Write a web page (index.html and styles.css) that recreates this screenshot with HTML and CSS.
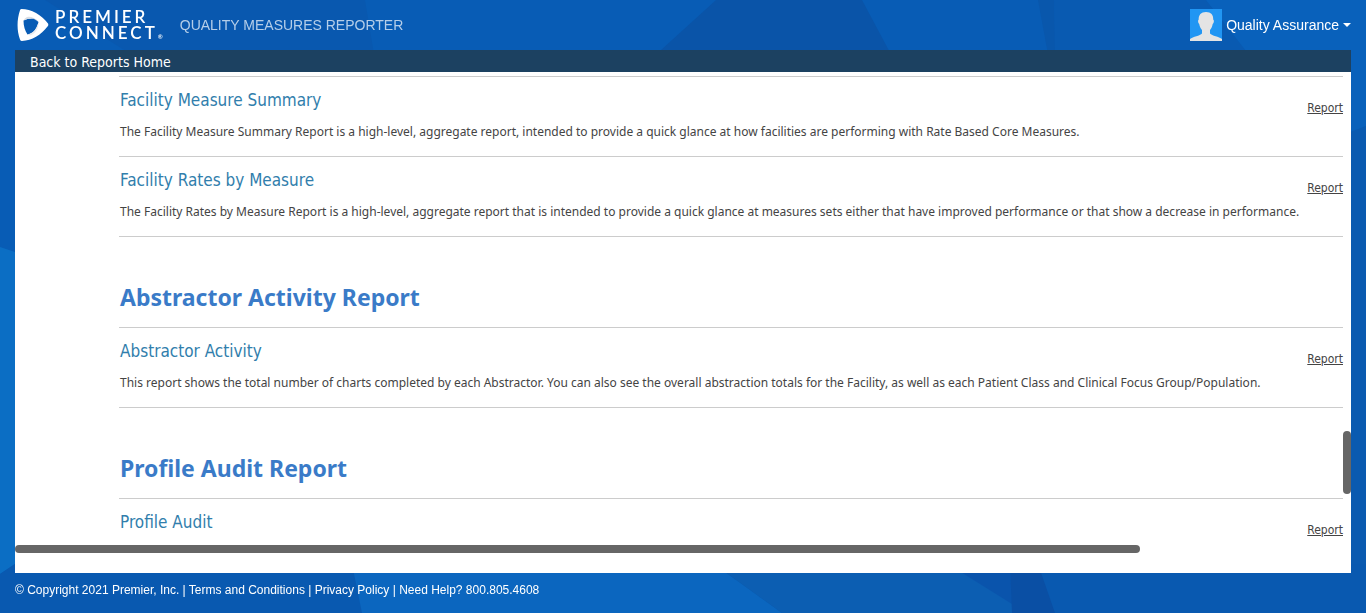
FILE: index.html
```html
<!DOCTYPE html>
<html lang="en">
<head>
<meta charset="utf-8">
<title>Quality Measures Reporter</title>
<link rel="stylesheet" href="styles.css">
</head>
<body>
<svg class="backdrop" viewBox="0 0 1366 613" preserveAspectRatio="none" aria-hidden="true">
  <path fill="#085cb5" d="M0 0h1366v613H0z"/>
  <path fill="#0958af" d="M45 0h320l10 60H140z"/>
  <path fill="#0a54a8" d="M716 0h146l32 60H650z"/>
  <path fill="#0957ac" d="M1038 0h16l2 60h-7z"/>
  <path fill="#095ab1" d="M1054 0h152l48 60h-199z"/>
  <path fill="#0961bb" d="M1206 0h160v126l-20 10-96-80z"/>
  <path fill="#0a5ab0" d="M1340 136l26-10v487h-26z"/>
  <path fill="#0b6ec4" d="M0 247l30 10v297L0 574z"/>
  <path fill="#0959b0" d="M0 574l30-20v10h1336v49H0z"/>
  <path fill="#0b66bf" d="M352 564l10 49h420l-68-49z"/>
  <path fill="#0c5eb2" d="M714 564h240l72 49H782z"/>
  <path fill="#0a54ac" d="M948 564h62l2 40z"/>
  <path fill="#0a4fa4" d="M1010 564h28l17 49h-43z"/>
</svg>
<div class="page">
  <header class="header">
    <a class="brand" href="#" aria-label="Premier Connect">
      <svg class="brand-mark" viewBox="0 0 32 32" aria-hidden="true">
        <path fill="#fff" fill-rule="evenodd" d="M4.500 0 C14 0 25 6 31 14.500 Q31.800 16 30.500 17.500 C24 26 15 31.500 5 32 Q3.500 32 3 30.500 C-.5 21 0 10 3 1.200 Q3.400 0 4.500 0Z M6.500 11.500 C6.500 17 8 22 10.500 25.500 C15.500 24.500 19.500 21 21.500 13 Q20 10.500 16.500 9.500 Q11 9 6.500 11.500Z"/>
        <path fill="#d9dde3" d="M6.500 11.500Q11 9 16.500 9.500L21.500 13Q16 7 10 8 7.500 9 6.500 11.500Z"/>
        <path fill="#e9ebee" d="M21.500 13C19.500 21 15.500 24.500 10.500 25.500L13 26.500C18 25 22 20 21.500 13Z"/>
      </svg>
      <span class="brand-name"><span>PREMIER</span><span>CONNECT<small class="brand-reg">®</small></span></span>
    </a>
    <span class="app-name">QUALITY MEASURES REPORTER</span>
    <button class="user" type="button">
      <svg class="avatar" viewBox="0 0 32 32" aria-hidden="true">
        <path fill="#2196f3" d="M0 0h32v32H0z"/>
        <path fill="#e4e4e4" d="M16 3C11 3 8.500 6 8.700 10.500 7.700 11 7.900 14 9.200 15 9.700 18 11 20 12 21V24.500C10 27 3 27.500 0 30V32H32V30C29 27.500 22 27 20 24.500V21C21 20 22.200 18 22.700 15 24.100 14 24.300 11 23.200 10.500 23.500 6 21 3 16 3Z"/>
      </svg>
      <span>Quality Assurance</span>
      <span class="caret"></span>
    </button>
  </header>
  <div class="panel">
    <nav class="nav"><a href="#">Back to Reports Home</a></nav>
    <main class="reports">
      <section>
        <article class="report">
          <div><h3>Facility Measure Summary</h3>
          <p>The Facility Measure Summary Report is a high-level, aggregate report, intended to provide a quick glance at how facilities are performing with Rate Based Core Measures.</p></div>
          <a class="report-link" href="#">Report</a>
        </article>
        <article class="report">
          <div><h3>Facility Rates by Measure</h3>
          <p>The Facility Rates by Measure Report is a high-level, aggregate report that is intended to provide a quick glance at measures sets either that have improved performance or that show a decrease in performance.</p></div>
          <a class="report-link" href="#">Report</a>
        </article>
      </section>
      <section>
        <h2>Abstractor Activity Report</h2>
        <article class="report">
          <div><h3>Abstractor Activity</h3>
          <p>This report shows the total number of charts completed by each Abstractor. You can also see the overall abstraction totals for the Facility, as well as each Patient Class and Clinical Focus Group/Population.</p></div>
          <a class="report-link" href="#">Report</a>
        </article>
      </section>
      <section>
        <h2>Profile Audit Report</h2>
        <article class="report report-last">
          <div><h3>Profile Audit</h3></div>
          <a class="report-link" href="#">Report</a>
        </article>
      </section>
    </main>
    <span class="thumb thumb-y"></span>
    <span class="thumb thumb-x"></span>
  </div>
  <footer class="footer">© Copyright 2021 Premier, Inc. | <a href="#">Terms and Conditions</a> | <a href="#">Privacy Policy</a> | Need Help? 800.805.4608</footer>
</div>
</body>
</html>
```
FILE: styles.css
```css
* { box-sizing: border-box; }
body {
  margin: 0;
  font-family: "Liberation Sans", Arial, sans-serif;
  color: #444;
}
a { color: inherit; text-decoration: none; }
h2, h3, p { margin: 0; }

.backdrop {
  position: fixed;
  inset: 0;
  width: 100%;
  height: 100%;
  z-index: -1;
}
.page {
  display: flex;
  flex-direction: column;
  min-height: 100vh;
  padding: 0 15px;
}

.header {
  display: flex;
  align-items: center;
  height: 50px;
  color: #fff;
}
.brand {
  display: flex;
  align-items: center;
  gap: 6px;
  padding-left: 2px;
}
.brand-mark { width: 32px; height: 32px; }
.brand-name {
  display: flex;
  flex-direction: column;
  padding-top: 3px;
  font: 600 17px/16px Lato, sans-serif;
  letter-spacing: 3px;
}
.brand-reg { font-size: 6px; letter-spacing: 0; }
.app-name {
  margin-left: 17px;
  font-size: 14px;
  line-height: 20px;
  color: #b5cee9;
}
.user {
  display: flex;
  align-items: center;
  gap: 4px;
  margin-left: auto;
  padding: 0;
  border: 0;
  background: none;
  font: 14px/20px "Liberation Sans", Arial, sans-serif;
  color: #fff;
}
.avatar { width: 32px; height: 32px; }
.caret {
  border: 4px solid transparent;
  border-top-color: #fff;
  border-bottom: 0;
}

.panel {
  position: relative;
  flex: 1;
  background: #fff;
}
.nav {
  padding: 3px 15px 0;
  background: #1c4161;
  color: #fff;
  font: 14px/19px "DejaVu Sans Condensed", "DejaVu Sans", sans-serif;
  font-stretch: condensed;
}
.reports {
  padding: 4px 8px 0 104px;
  font-family: "DejaVu Sans Condensed", "DejaVu Sans", sans-serif;
}
.report {
  display: flex;
  justify-content: space-between;
  padding: 11px 0 16px 1px;
  border-top: 1px solid #ccc;
}
.report:last-child { border-bottom: 1px solid #ccc; }
.report.report-last { border-bottom: 0; }
h2 {
  padding: 44px 0 14px 1px;
  font-family: "Noto Sans", sans-serif;
  font-size: 23px;
  line-height: 32px;
  color: #3a7bc8;
}
h3 {
  font-size: 17px;
  font-weight: 400;
  line-height: 24px;
  color: #317eac;
}
p {
  margin-top: 12px;
  font-family: "Noto Sans", sans-serif;
  font-size: 12px;
  line-height: 16px;
}
.report-link {
  align-self: flex-start;
  padding-top: 12px;
  font-size: 12px;
  line-height: 16px;
  text-decoration: underline;
}

.thumb {
  position: absolute;
  border-radius: 4px;
  background: #666;
}
.thumb-y { right: 0; bottom: 79px; width: 8px; height: 63px; }
.thumb-x { left: 0; bottom: 20px; width: 84.2%; height: 8px; }

.footer {
  padding: 8px 0 14px;
  font-size: 12px;
  line-height: 18px;
  color: #fff;
}
```
